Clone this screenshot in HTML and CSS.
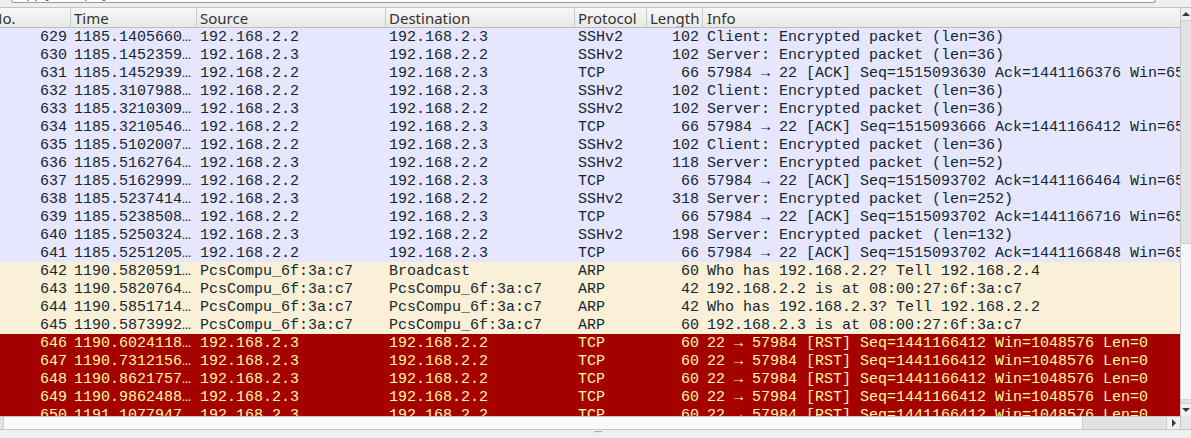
FILE: index.html
```html
<!DOCTYPE html>
<html>
<head>
<meta charset="utf-8">
<link rel="stylesheet" href="styles.css">
</head>
<body>
<div class="app">
  <div class="topbar">
    <div class="filterbox"><span class="ph">Apply a display filter … &lt;Ctrl-/&gt;</span></div>
  </div>
  <div class="pane">
    <div class="list">
      <div class="hdr cols">
        <div class="h">No.</div>
        <div class="h">Time</div>
        <div class="h">Source</div>
        <div class="h">Destination</div>
        <div class="h">Protocol</div>
        <div class="h">Length</div>
        <div class="h last">Info</div>
      </div>
      <div class="rows">
        <div class="row cols tcp"><span class="r">629</span><span>1185.1405660…</span><span>192.168.2.2</span><span>192.168.2.3</span><span>SSHv2</span><span class="r">102</span><span class="info">Client: Encrypted packet (len=36)</span></div>
        <div class="row cols tcp"><span class="r">630</span><span>1185.1452359…</span><span>192.168.2.3</span><span>192.168.2.2</span><span>SSHv2</span><span class="r">102</span><span class="info">Server: Encrypted packet (len=36)</span></div>
        <div class="row cols tcp"><span class="r">631</span><span>1185.1452939…</span><span>192.168.2.2</span><span>192.168.2.3</span><span>TCP</span><span class="r">66</span><span class="info">57984 → 22 [ACK] Seq=1515093630 Ack=1441166376 Win=65535 Len=0</span></div>
        <div class="row cols tcp"><span class="r">632</span><span>1185.3107988…</span><span>192.168.2.2</span><span>192.168.2.3</span><span>SSHv2</span><span class="r">102</span><span class="info">Client: Encrypted packet (len=36)</span></div>
        <div class="row cols tcp"><span class="r">633</span><span>1185.3210309…</span><span>192.168.2.3</span><span>192.168.2.2</span><span>SSHv2</span><span class="r">102</span><span class="info">Server: Encrypted packet (len=36)</span></div>
        <div class="row cols tcp"><span class="r">634</span><span>1185.3210546…</span><span>192.168.2.2</span><span>192.168.2.3</span><span>TCP</span><span class="r">66</span><span class="info">57984 → 22 [ACK] Seq=1515093666 Ack=1441166412 Win=65535 Len=0</span></div>
        <div class="row cols tcp"><span class="r">635</span><span>1185.5102007…</span><span>192.168.2.2</span><span>192.168.2.3</span><span>SSHv2</span><span class="r">102</span><span class="info">Client: Encrypted packet (len=36)</span></div>
        <div class="row cols tcp"><span class="r">636</span><span>1185.5162764…</span><span>192.168.2.3</span><span>192.168.2.2</span><span>SSHv2</span><span class="r">118</span><span class="info">Server: Encrypted packet (len=52)</span></div>
        <div class="row cols tcp"><span class="r">637</span><span>1185.5162999…</span><span>192.168.2.2</span><span>192.168.2.3</span><span>TCP</span><span class="r">66</span><span class="info">57984 → 22 [ACK] Seq=1515093702 Ack=1441166464 Win=65535 Len=0</span></div>
        <div class="row cols tcp"><span class="r">638</span><span>1185.5237414…</span><span>192.168.2.3</span><span>192.168.2.2</span><span>SSHv2</span><span class="r">318</span><span class="info">Server: Encrypted packet (len=252)</span></div>
        <div class="row cols tcp"><span class="r">639</span><span>1185.5238508…</span><span>192.168.2.2</span><span>192.168.2.3</span><span>TCP</span><span class="r">66</span><span class="info">57984 → 22 [ACK] Seq=1515093702 Ack=1441166716 Win=65535 Len=0</span></div>
        <div class="row cols tcp"><span class="r">640</span><span>1185.5250324…</span><span>192.168.2.3</span><span>192.168.2.2</span><span>SSHv2</span><span class="r">198</span><span class="info">Server: Encrypted packet (len=132)</span></div>
        <div class="row cols tcp"><span class="r">641</span><span>1185.5251205…</span><span>192.168.2.2</span><span>192.168.2.3</span><span>TCP</span><span class="r">66</span><span class="info">57984 → 22 [ACK] Seq=1515093702 Ack=1441166848 Win=65535 Len=0</span></div>
        <div class="row cols arp"><span class="r">642</span><span>1190.5820591…</span><span>PcsCompu_6f:3a:c7</span><span>Broadcast</span><span>ARP</span><span class="r">60</span><span class="info">Who has 192.168.2.2? Tell 192.168.2.4</span></div>
        <div class="row cols arp"><span class="r">643</span><span>1190.5820764…</span><span>PcsCompu_6f:3a:c7</span><span>PcsCompu_6f:3a:c7</span><span>ARP</span><span class="r">42</span><span class="info">192.168.2.2 is at 08:00:27:6f:3a:c7</span></div>
        <div class="row cols arp"><span class="r">644</span><span>1190.5851714…</span><span>PcsCompu_6f:3a:c7</span><span>PcsCompu_6f:3a:c7</span><span>ARP</span><span class="r">42</span><span class="info">Who has 192.168.2.3? Tell 192.168.2.2</span></div>
        <div class="row cols arp"><span class="r">645</span><span>1190.5873992…</span><span>PcsCompu_6f:3a:c7</span><span>PcsCompu_6f:3a:c7</span><span>ARP</span><span class="r">60</span><span class="info">192.168.2.3 is at 08:00:27:6f:3a:c7</span></div>
        <div class="row cols rst"><span class="r">646</span><span>1190.6024118…</span><span>192.168.2.3</span><span>192.168.2.2</span><span>TCP</span><span class="r">60</span><span class="info">22 → 57984 [RST] Seq=1441166412 Win=1048576 Len=0</span></div>
        <div class="row cols rst"><span class="r">647</span><span>1190.7312156…</span><span>192.168.2.3</span><span>192.168.2.2</span><span>TCP</span><span class="r">60</span><span class="info">22 → 57984 [RST] Seq=1441166412 Win=1048576 Len=0</span></div>
        <div class="row cols rst"><span class="r">648</span><span>1190.8621757…</span><span>192.168.2.3</span><span>192.168.2.2</span><span>TCP</span><span class="r">60</span><span class="info">22 → 57984 [RST] Seq=1441166412 Win=1048576 Len=0</span></div>
        <div class="row cols rst"><span class="r">649</span><span>1190.9862488…</span><span>192.168.2.3</span><span>192.168.2.2</span><span>TCP</span><span class="r">60</span><span class="info">22 → 57984 [RST] Seq=1441166412 Win=1048576 Len=0</span></div>
        <div class="row cols rst"><span class="r">650</span><span>1191.1077947…</span><span>192.168.2.3</span><span>192.168.2.2</span><span>TCP</span><span class="r">60</span><span class="info">22 → 57984 [RST] Seq=1441166412 Win=1048576 Len=0</span></div>
      </div>
    </div>
    <div class="vscroll">
      <div class="arrowbox up"><span class="tri-up"></span></div>
      <div class="vtrack"></div>
      <div class="vthumb"></div>
      <div class="vgap"></div>
      <div class="arrowbox down"><span class="tri-down"></span></div>
    </div>
    <div class="hscroll">
      <div class="hlead"></div>
      <div class="hthumb"></div>
      <div class="htrack"></div>
      <div class="harrow"><span class="tri-right"></span></div>
    </div>
    <div class="corner"></div>
  </div>
  <div class="splitter"><span class="grip">······</span></div>
</div>
</body>
</html>
```
FILE: styles.css
```css
* { box-sizing: border-box; }

html, body {
  margin: 0;
  padding: 0;
}

body {
  width: 1191px;
  height: 438px;
  overflow: hidden;
  background: #efefef;
  font-family: "Noto Sans", "DejaVu Sans", sans-serif;
}

.app {
  width: 1191px;
  height: 438px;
  display: flex;
  flex-direction: column;
}

/* top: remains of the display-filter box */
.topbar {
  height: 8px;
  background: #efefef;
  border-bottom: 1px solid #c2c2c2;
  padding-left: 11px;
}

.filterbox {
  width: 1145px;
  height: 3px;
  background: #ffffff;
  border: 1px solid #9a9a9a;
  border-top: none;
  border-radius: 0 0 3px 3px;
  overflow: hidden;
}

.ph {
  display: block;
  margin-top: -15px;
  padding-left: 6px;
  font-size: 13px;
  line-height: 16px;
  color: #5a5a5a;
  white-space: nowrap;
}

/* main pane */
.pane {
  display: grid;
  grid-template-columns: 1180px 11px;
  grid-template-rows: 408px 14px;
}

.list {
  overflow: hidden;
  background: #ffffff;
  display: flex;
  flex-direction: column;
}

.cols {
  display: grid;
  grid-template-columns: 83px 126px 189px 189px 72px 56px 477px;
  margin-left: -12px;
  width: 1192px;
}

.hdr {
  height: 20px;
  background: linear-gradient(#f8f8f8, #e8e8e8);
  border-bottom: 1px solid #bdbdbd;
  flex: none;
}

.h {
  font-size: 15px;
  line-height: 20px;
  color: #333333;
  padding-left: 3px;
  border-right: 1px solid #cbcbcb;
  white-space: nowrap;
  overflow: hidden;
}

.h.last {
  padding-left: 4px;
  border-right: none;
}

.rows {
  flex: 1;
  overflow: hidden;
}

.row {
  height: 18px;
  padding-top: 2px;
  font-family: "Liberation Mono", "DejaVu Sans Mono", monospace;
  font-size: 15px;
  line-height: 16px;
  white-space: pre;
}

.row span {
  padding-left: 3px;
  overflow: hidden;
}

.row span.r {
  text-align: right;
  padding-left: 0;
  padding-right: 4px;
}

.row span.info {
  padding-left: 4px;
}

.tcp { background: #e7e6ff; color: #12272e; }
.arp { background: #faf0d7; color: #12272e; }
.rst { background: #a40000; color: #fffc9c; }

/* vertical scrollbar */
.vscroll {
  display: flex;
  flex-direction: column;
  background: #e2e2e2;
  border-left: 1px solid #c6c6c6;
}

.arrowbox {
  height: 13px;
  flex: none;
  background: #f0f0f0;
  display: flex;
  align-items: center;
  justify-content: center;
}

.arrowbox.up { border-bottom: 1px solid #cfcfcf; }
.arrowbox.down { border-top: 1px solid #cfcfcf; }

.tri-up {
  width: 0;
  height: 0;
  border-left: 4px solid transparent;
  border-right: 4px solid transparent;
  border-bottom: 4px solid #3a3a3a;
}

.tri-down {
  width: 0;
  height: 0;
  border-left: 4px solid transparent;
  border-right: 4px solid transparent;
  border-top: 4px solid #3a3a3a;
}

.vtrack {
  height: 222px;
  flex: none;
}

.vthumb {
  height: 157px;
  flex: none;
  background: #f6f6f6;
  border-top: 1px solid #cfcfcf;
  border-bottom: 1px solid #cfcfcf;
}

.vgap { flex: 1; }

/* horizontal scrollbar */
.hscroll {
  display: flex;
  background: #e2e2e2;
  border-top: 1px solid #c6c6c6;
  border-bottom: 1px solid #c6c6c6;
}

.hlead {
  width: 3px;
  flex: none;
}

.hthumb {
  width: 1080px;
  flex: none;
  background: #fafafa;
  border-left: 1px solid #cdcdcd;
  border-right: 1px solid #cdcdcd;
}

.htrack { flex: 1; }

.harrow {
  width: 14px;
  flex: none;
  background: #f0f0f0;
  border-left: 1px solid #cfcfcf;
  display: flex;
  align-items: center;
  justify-content: center;
}

.tri-right {
  width: 0;
  height: 0;
  border-top: 4px solid transparent;
  border-bottom: 4px solid transparent;
  border-left: 4px solid #3a3a3a;
}

.corner {
  background: #e6e6e6;
  border-left: 1px solid #c6c6c6;
  border-bottom: 1px solid #c6c6c6;
}

/* splitter */
.splitter {
  flex: 1;
  background: #efefef;
  display: flex;
  justify-content: center;
}

.grip {
  font-size: 8px;
  line-height: 4px;
  color: #8a8a8a;
  letter-spacing: -1px;
  margin-left: 4px;
}
```
